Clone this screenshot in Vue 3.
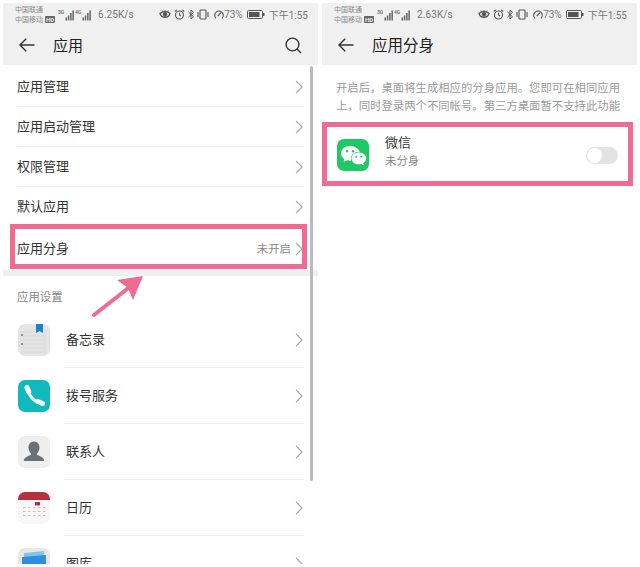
<script setup>
const panels = [
  { key: "apps", speed: "6.25K/s", net: ["3G", "4G"], title: "应用", search: true },
  { key: "twin", speed: "2.63K/s", net: ["3G", "4G"], title: "应用分身", search: false },
];
const menu = [
  { text: "应用管理" },
  { text: "应用启动管理" },
  { text: "权限管理" },
  { text: "默认应用" },
  { text: "应用分身", value: "未开启", tall: true },
];
const apps = [
  { text: "备忘录", icon: "notes" },
  { text: "拨号服务", icon: "phone" },
  { text: "联系人", icon: "contact" },
  { text: "日历", icon: "calendar" },
  { text: "图库", icon: "gallery" },
];
const bars = [
  { x: 7.5, h: 3 },
  { x: 9.8, h: 5 },
  { x: 12.1, h: 7.5 },
  { x: 14.4, h: 10 },
];
const calendarDots = [0, 1, 2, 3, 4].flatMap((c) => [0, 1, 2].map((r) => ({ c, r })));
</script>

<template>
  <div class="page">
    <section v-for="panel in panels" :key="panel.key" class="panel">
      <header class="top">
        <div class="status">
          <div class="carrier">
            <span>中国联通</span>
            <span>中国移动<b class="hd">HD</b></span>
          </div>
          <svg v-for="n in panel.net" :key="n" class="signal" width="16" height="12" viewBox="0 0 16 12">
            <text x="0" y="5" font-size="5" font-weight="700" fill="#777" font-family="Roboto, sans-serif">{{ n }}</text>
            <rect v-for="b in bars" :key="b.x" :x="b.x" :y="11.500 - b.h" width="1.500" :height="b.h" fill="#666" />
          </svg>
          <span class="speed">{{ panel.speed }}</span>
          <div class="status-right">
            <svg width="12" height="11" viewBox="0 0 12 11" fill="none" stroke="#555">
              <path d="M1 4.500C3 2 9 2 11 4.500C9.500 9.500 2.500 9.500 1 4.500Z" stroke-width="1.300" />
              <circle cx="6" cy="5.300" r="1.800" fill="#555" />
              <path d="M3 1.500l1 1.300M6 1v1.400M9 1.500L8 2.800" stroke-width="1" />
            </svg>
            <svg class="alarm" width="11" height="11" viewBox="0 0 11 11" fill="none" stroke="#555" stroke-width="1.100">
              <circle cx="5.500" cy="6" r="4" />
              <path d="M5.500 3.800V6l1.600 1M.8 2.500L2.800.9M10.200 2.500L8.200.9" />
            </svg>
            <svg class="bt" width="6" height="11" viewBox="0 0 6 11" fill="none" stroke="#555" stroke-width="1">
              <path d="M.5 3l5 4.800L3 10V1l2.500 2.200L.5 8" />
            </svg>
            <svg class="vibe" width="12" height="11" viewBox="0 0 12 11" fill="none" stroke="#555" stroke-width="1.100">
              <rect x="3" y="1" width="6" height="9" rx=".6" />
              <path d="M1 3v5M11 3v5" />
            </svg>
            <svg class="gauge" width="10" height="11" viewBox="0 0 10 11" fill="none" stroke="#555" stroke-width="1.100">
              <path d="M2 9.400A4.300 4.300 0 1 1 8 9.400" />
              <path d="M3.800 7.200L6.800 3.600" stroke-width="1.300" />
            </svg>
            <span class="pct">73%</span>
            <svg class="battery" width="18" height="9" viewBox="0 0 18 9">
              <rect x=".5" y=".5" width="15" height="8" rx="1" fill="none" stroke="#555" />
              <rect x="2" y="2" width="10.500" height="5" fill="#555" />
              <rect x="16" y="3" width="1.500" height="3" fill="#555" />
            </svg>
            <span class="clock">下午1:55</span>
          </div>
        </div>
        <div class="bar">
          <svg class="back" width="16" height="14" viewBox="0 0 16 14" fill="none" stroke="#333" stroke-width="1.400">
            <path d="M15.500 7H1M7.200.8L1 7l6.200 6.200" />
          </svg>
          <h1 class="title">{{ panel.title }}</h1>
          <svg v-if="panel.search" class="search" width="17" height="17" viewBox="0 0 17 17" fill="none" stroke="#333" stroke-width="1.400">
            <circle cx="7.500" cy="7.500" r="6.400" />
            <path d="M12 12l4 4" />
          </svg>
        </div>
      </header>

      <main v-if="panel.key === 'apps'" class="body">
        <ul class="menu">
          <li v-for="item in menu" :key="item.text" class="menu-row" :class="{ tall: item.tall }">
            <span class="label">{{ item.text }}</span>
            <span v-if="item.value" class="value">{{ item.value }}</span>
            <svg class="chev" width="8" height="14" viewBox="0 0 8 14" fill="none" stroke="#aaa" stroke-width="1.200">
              <path d="M1 1l6 6-6 6" />
            </svg>
          </li>
        </ul>
        <div class="band"></div>
        <div class="section">应用设置</div>
        <ul>
          <li v-for="app in apps" :key="app.text" class="app-row">
            <svg class="app-icon" width="32" height="32" viewBox="0 0 32 32">
              <template v-if="app.icon === 'notes'">
                <rect width="32" height="32" rx="7" fill="#e4e4e4" />
                <path d="M4 8h24M4 12h24M4 16h24M4 20h24M4 24h24M4 28h24" stroke="#d2d2d2" stroke-width=".7" />
                <circle cx="4" cy="11" r="1" fill="#777" />
                <circle cx="4" cy="20" r="1" fill="#777" />
                <path d="M18 0h7v9l-3.500-2L18 9Z" fill="#1f7fc9" />
              </template>
              <template v-else-if="app.icon === 'phone'">
                <rect width="32" height="32" rx="7" fill="#10b9bb" />
                <path d="M9.500 8.500C10 15 16 22 24 23.500" fill="none" stroke="#fff" stroke-width="3" />
                <path d="M9 7.500l1.800 4.500" stroke="#fff" stroke-width="5" stroke-linecap="round" />
                <path d="M20 21.500l4.500 2" stroke="#fff" stroke-width="5" stroke-linecap="round" />
              </template>
              <template v-else-if="app.icon === 'contact'">
                <rect width="32" height="32" rx="7" fill="#eceef0" />
                <path d="M16 5.500c3.600 0 5.500 2.800 5.500 6 0 2.500-1 4.500-2.300 5.700v1.500c1 1.200 7 1.800 7 6.300H5.800c0-4.500 6-5.100 7-6.300v-1.500c-1.300-1.200-2.300-3.200-2.300-5.700 0-3.200 1.900-6 5.500-6Z" fill="#6c7176" />
              </template>
              <template v-else-if="app.icon === 'calendar'">
                <rect width="32" height="32" rx="7" fill="#f8f7f7" />
                <path d="M0 8V7a7 7 0 0 1 7-7h18a7 7 0 0 1 7 7v1Z" fill="#b8303c" />
                <rect x="17" y="10" width="5" height="3.500" fill="#b8303c" />
                <rect
                  v-for="d in calendarDots"
                  :key="`${d.c}-${d.r}`"
                  :x="5 + d.c * 5"
                  :y="15 + d.r * 4"
                  width="2.500"
                  height="1"
                  fill="#dfb6ba"
                />
              </template>
              <template v-else>
                <rect width="32" height="32" rx="7" fill="#ebe6df" />
                <path d="M6 5l20-2v10H6Z" fill="#7fc4ee" />
                <path d="M4 9l24-2v17H4Z" fill="#2e8fe0" />
              </template>
            </svg>
            <div class="app-main">
              <span class="label">{{ app.text }}</span>
              <svg class="chev" width="8" height="14" viewBox="0 0 8 14" fill="none" stroke="#aaa" stroke-width="1.200">
                <path d="M1 1l6 6-6 6" />
              </svg>
            </div>
          </li>
        </ul>
        <div class="scrollbar"></div>
        <div class="mark mark-left"></div>
        <svg class="pointer" width="56" height="44" viewBox="0 0 56 44">
          <path d="M3 41L45 8" stroke="#f06b92" stroke-width="4" stroke-linecap="round" />
          <path d="M52 2L26 6 37 14 42 26Z" fill="#f06b92" />
        </svg>
      </main>

      <main v-else class="body">
        <p class="intro">开启后，桌面将生成相应的分身应用。您即可在相同应用上，同时登录两个不同帐号。第三方桌面暂不支持此功能</p>
        <div class="twin-row">
          <svg class="app-icon" width="32" height="32" viewBox="0 0 32 32">
            <rect width="32" height="32" rx="7" fill="#1fc765" />
            <path d="M13 7c-5 0-9 3.200-9 7.300 0 2.300 1.200 4.300 3.200 5.600L6.500 23l3.300-1.700c1 .3 2 .5 3.200.5.400 0 .8 0 1.200-.1-.2-.7-.3-1.300-.3-2 0-3.900 3.600-7 8.200-7h.8C21.700 9.500 17.700 7 13 7Z" fill="#fff" />
            <path d="M21.800 13.500c-4 0-7.300 2.600-7.300 5.900 0 3.200 3.300 5.900 7.300 5.900.8 0 1.700-.1 2.400-.4l2.600 1.400-.6-2.400c1.800-1.100 3-2.700 3-4.500 0-3.300-3.300-5.900-7.400-5.900Z" fill="#fff" />
            <circle cx="10" cy="12.300" r="1.200" fill="#1fc765" />
            <circle cx="16" cy="12.300" r="1.200" fill="#1fc765" />
            <circle cx="19.300" cy="17.800" r="1" fill="#1fc765" />
            <circle cx="24.300" cy="17.800" r="1" fill="#1fc765" />
          </svg>
          <div class="twin-text">
            <span class="twin-name">微信</span>
            <span class="twin-sub">未分身</span>
          </div>
          <div class="switch"><i class="knob"></i></div>
        </div>
        <div class="mark mark-right"></div>
      </main>
    </section>
  </div>
</template>

<style>
html,
body {
  background: #fff;
}
</style>

<style scoped>
* {
  box-sizing: border-box;
}
ul {
  list-style: none;
  margin: 0;
  padding: 0;
}
.page {
  display: flex;
  gap: 4px;
  width: 640px;
  height: 567px;
  padding: 3px 3px 3px;
  font-family: Roboto, "Noto Sans CJK SC", sans-serif;
  color: #333;
  overflow: hidden;
}
.panel {
  width: 315px;
  display: flex;
  flex-direction: column;
  overflow: hidden;
}
.top {
  height: 62px;
  background: #f0f0f0;
  flex: none;
}
.status {
  display: flex;
  align-items: center;
  height: 23px;
  padding: 0 10px 0 12px;
  color: #777;
}
.carrier {
  display: flex;
  flex-direction: column;
  width: 43px;
  font-size: 7px;
  line-height: 10px;
  color: #8a8a8a;
}
.hd {
  margin-left: 2px;
  padding: 0 1px;
  font-size: 6px;
  line-height: 6px;
  color: #eee;
  background: #666;
  border-radius: 1px;
}
.signal {
  margin-right: 1px;
}
.speed {
  margin-left: 6px;
  font-size: 10px;
  letter-spacing: .1px;
}
.status-right {
  margin-left: auto;
  display: flex;
  align-items: center;
}
.alarm {
  margin-left: 3px;
}
.bt {
  margin-left: 3px;
}
.vibe {
  margin-left: 3px;
}
.gauge {
  margin-left: 5px;
}
.pct {
  font-size: 10px;
}
.battery {
  margin-left: 4px;
}
.clock {
  margin-left: 4px;
  font-size: 10px;
}
.bar {
  display: flex;
  align-items: center;
  height: 38px;
  padding: 0 16px;
}
.back {
  flex: none;
}
.title {
  margin: -2px 0 0 18px;
  font-size: 15px;
  font-weight: 400;
  color: #222;
}
.panel:last-child .title {
  font-size: 15.5px;
}
.search {
  margin-left: auto;
}
.body {
  position: relative;
  flex: 1;
  background: #fff;
  overflow: hidden;
}
.menu {
  padding-top: 2px;
}
.menu-row {
  display: flex;
  align-items: center;
  height: 40px;
  margin: 0 14px;
  border-bottom: 1px solid #eee;
}
.menu-row.tall {
  height: 43px;
  border-bottom: 0;
}
.label {
  margin-top: -2px;
  font-size: 13px;
  color: #333;
}
.value {
  margin: -2px 0 0 auto;
  font-size: 11.4px;
  color: #8c8c8c;
}
.chev {
  margin-left: auto;
  margin-right: 1px;
  flex: none;
}
.value + .chev {
  margin-left: 4px;
}
.band {
  height: 6px;
  background: #f0f0f0;
}
.section {
  padding: 12px 14px 6px;
  font-size: 11.4px;
  line-height: 18px;
  color: #888;
}
.app-row {
  display: flex;
  align-items: center;
  height: 56px;
}
.app-icon {
  flex: none;
  display: block;
}
.app-row .app-icon {
  margin: 0 14px 0 15px;
}
.app-main {
  flex: 1;
  display: flex;
  align-items: center;
  height: 56px;
  margin-right: 14px;
  padding-left: 2px;
  border-bottom: 1px solid #eee;
}
.scrollbar {
  position: absolute;
  left: 307px;
  top: 1px;
  width: 3px;
  height: 415px;
  border-radius: 2px;
  background: #bbb;
}
.mark {
  position: absolute;
  border: 5px solid #f06b92;
}
.mark-left {
  left: 7px;
  top: 159px;
  width: 297px;
  height: 45px;
}
.mark-right {
  left: 0;
  top: 57px;
  width: 311px;
  height: 64px;
}
.pointer {
  position: absolute;
  left: 88px;
  top: 209px;
}
.intro {
  width: 285px;
  margin: 0;
  padding: 14px 0 0 14px;
  font-size: 11.36px;
  line-height: 18px;
  color: #9a9a9a;
  box-sizing: content-box;
}
.twin-row {
  display: flex;
  align-items: center;
  height: 52px;
  margin-top: 14px;
  padding: 0 19px 0 15px;
}
.twin-text {
  display: flex;
  flex-direction: column;
  margin-left: 16px;
  padding-bottom: 6px;
}
.twin-name {
  font-size: 13px;
  line-height: 18px;
  color: #333;
}
.twin-sub {
  font-size: 11.4px;
  line-height: 18px;
  color: #888;
}
.switch {
  margin-left: auto;
  width: 32px;
  height: 17px;
  border-radius: 9px;
  background: #e3e3e3;
  padding: 1px;
}
.knob {
  display: block;
  width: 15px;
  height: 15px;
  border-radius: 50%;
  background: #fff;
}
</style>
